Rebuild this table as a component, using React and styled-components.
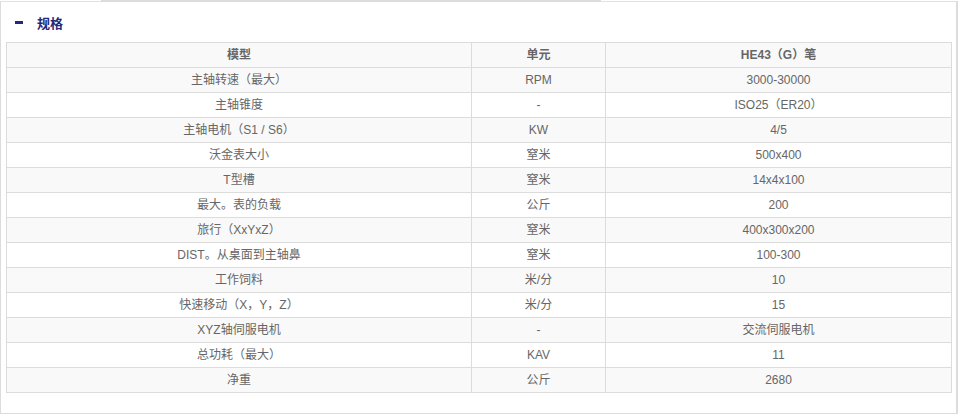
import React from 'react'
import styled, { createGlobalStyle } from 'styled-components'

const specs = [
  ['主轴转速（最大）', 'RPM', '3000-30000'],
  ['主轴锥度', '-', 'ISO25（ER20）'],
  ['主轴电机（S1 / S6）', 'KW', '4/5'],
  ['沃金表大小', '窒米', '500x400'],
  ['T型槽', '窒米', '14x4x100'],
  ['最大。表的负载', '公斤', '200'],
  ['旅行（XxYxZ）', '窒米', '400x300x200'],
  ['DIST。从桌面到主轴鼻', '窒米', '100-300'],
  ['工作饲料', '米/分', '10'],
  ['快速移动（X，Y，Z）', '米/分', '15'],
  ['XYZ轴伺服电机', '-', '交流伺服电机'],
  ['总功耗（最大）', 'KAV', '11'],
  ['净重', '公斤', '2680']
]

const App = () => (
  <>
    <GlobalStyle />
    <Panel>
      <Title>
        <Dash />
        <TitleText>规格</TitleText>
      </Title>
      <Table>
        <colgroup>
          <col style={{ width: 465 }} />
          <col style={{ width: 134 }} />
          <col />
        </colgroup>
        <thead>
          <Row striped>
            <Head>模型</Head>
            <Head>单元</Head>
            <Head>HE43（G）笔</Head>
          </Row>
        </thead>
        <tbody>
          {specs.map((row, i) => (
            <Row key={row[0]} striped={i % 2 === 0}>
              {row.map((cell, j) => (
                <Cell key={j}>{cell}</Cell>
              ))}
            </Row>
          ))}
        </tbody>
      </Table>
    </Panel>
  </>
)

const GlobalStyle = createGlobalStyle`
  body {
    margin: 0;
    background: #fff;
    font-family: "Liberation Sans", "Noto Sans CJK SC", sans-serif;
  }
`

const Panel = styled.section`
  position: relative;
  box-sizing: border-box;
  width: 958px;
  height: 413px;
  margin-top: 1px;
  padding: 0 4px 0 5px;
  border: 1px solid #e2e2e2;
  border-left-color: #dcdcdc;
  border-right: 2px solid #dcdcdc;
  border-bottom: 1px solid #dcdcdc;

  &::before {
    content: "";
    position: absolute;
    top: -2px;
    left: 100px;
    width: 500px;
    height: 2px;
    background: #dcdcdc;
  }
`

const Title = styled.h3`
  display: flex;
  align-items: center;
  height: 40px;
  margin: 0;
  padding-left: 9px;
  padding-top: 1px;
  box-sizing: border-box;
`

const Dash = styled.span`
  width: 8px;
  height: 3px;
  background: #1f2a78;
  margin-right: 14px;
`

const TitleText = styled.span`
  font-size: 13px;
  font-weight: bold;
  color: #1f2a78;
  font-family: "Noto Sans CJK SC", sans-serif;
`

const Table = styled.table`
  width: 946px;
  border-collapse: collapse;
  table-layout: fixed;
  font-size: 12px;
  color: #666;
`

const Row = styled.tr`
  height: 25px;
  background: ${(props) => (props.striped ? '#f9f9f9' : '#fff')};
`

const Cell = styled.td`
  box-sizing: border-box;
  height: 25px;
  padding: 0;
  text-align: center;
  vertical-align: middle;
  border: 1px solid #dcdcdc;
  line-height: 23px;
`

const Head = styled(Cell).attrs({ as: 'th' })`
  font-weight: bold;
`

export default App
